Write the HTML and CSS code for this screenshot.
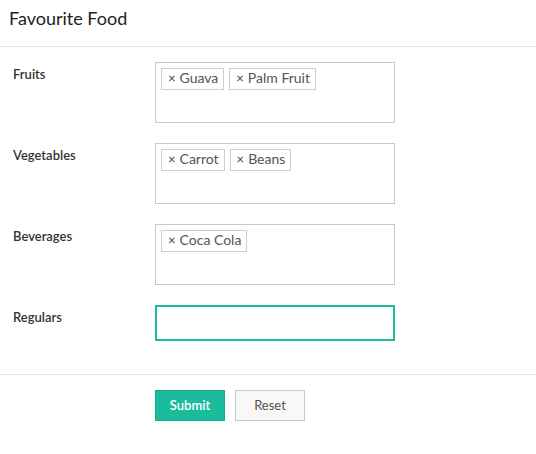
FILE: index.html
```html
<!DOCTYPE html>
<html>
<head>
<meta charset="utf-8">
<link rel="stylesheet" href="styles.css">
</head>
<body>
<div class="header">Favourite Food</div>
<form class="form">
  <div class="row">
    <label class="label">Fruits</label>
    <div class="tagbox">
      <span class="tag"><span class="x">×</span>Guava</span>
      <span class="tag"><span class="x">×</span>Palm Fruit</span>
    </div>
  </div>
  <div class="row">
    <label class="label">Vegetables</label>
    <div class="tagbox">
      <span class="tag"><span class="x">×</span>Carrot</span>
      <span class="tag"><span class="x">×</span>Beans</span>
    </div>
  </div>
  <div class="row">
    <label class="label">Beverages</label>
    <div class="tagbox">
      <span class="tag"><span class="x">×</span>Coca Cola</span>
    </div>
  </div>
  <div class="row last">
    <label class="label">Regulars</label>
    <div class="input"></div>
  </div>
  <div class="footer">
    <button type="button" class="btn submit">Submit</button>
    <button type="button" class="btn reset">Reset</button>
  </div>
</form>
</body>
</html>
```
FILE: styles.css
```css
html, body {
  margin: 0;
  padding: 0;
  background: #fff;
  font-family: Lato, "Open Sans", sans-serif;
  color: #333;
}
.header {
  height: 47px;
  box-sizing: border-box;
  padding: 6px 9px 0;
  font-size: 18px;
  line-height: 24px;
  color: #222;
  border-bottom: 1px solid #e8e8e8;
}
.form {
  margin: 0;
  padding-top: 15px;
}
.row {
  display: flex;
  margin-bottom: 20px;
}
.row.last {
  margin-bottom: 33px;
}
.label {
  flex: 0 0 155px;
  padding-left: 13px;
  box-sizing: border-box;
  font-size: 13px;
  font-weight: 600;
  line-height: 16px;
  padding-top: 4px;
  color: #333;
}
.tagbox {
  width: 240px;
  height: 61px;
  box-sizing: border-box;
  border: 1px solid #c8c8c8;
  padding: 5px 0 0 5px;
  display: flex;
  align-items: flex-start;
  gap: 5px;
}
.tag {
  display: inline-flex;
  align-items: center;
  height: 22px;
  box-sizing: border-box;
  border: 1px solid #cfcfcf;
  padding: 0 5px 2px 6px;
  font-size: 14px;
  line-height: 18px;
  color: #555;
}
.x {
  font-size: 13px;
  color: #444;
  margin-right: 4px;
}
.input {
  width: 240px;
  height: 36px;
  box-sizing: border-box;
  border: 2px solid #1abc9c;
}
.footer {
  border-top: 1px solid #e5e5e5;
  padding: 15px 0 0 155px;
  display: flex;
  gap: 10px;
}
.btn {
  width: 70px;
  height: 31px;
  box-sizing: border-box;
  font-family: Lato, "Open Sans", sans-serif;
  font-size: 13px;
  padding: 0 0 2px;
  cursor: pointer;
}
.submit {
  background: #1abc9c;
  border: 1px solid #16a98b;
  color: #fff;
  font-weight: 600;
}
.reset {
  background: #f8f8f8;
  border: 1px solid #c8c8c8;
  color: #555;
}
```
